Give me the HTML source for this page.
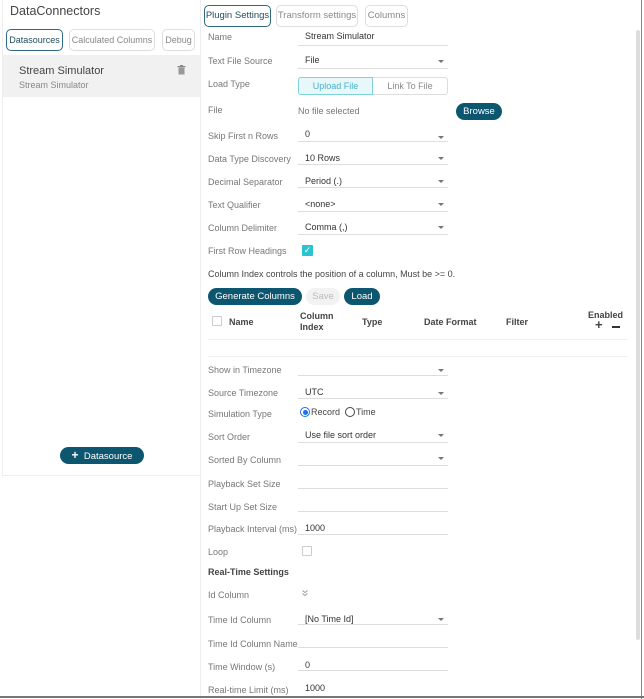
<!DOCTYPE html>
<html><head><meta charset="utf-8"><style>
*{margin:0;padding:0;box-sizing:border-box}
body{width:644px;height:699px;overflow:hidden;background:#fff;font-family:"Liberation Sans",sans-serif;font-size:9px;color:#333;position:relative}
.a{position:absolute;white-space:nowrap}
.l{position:absolute;left:208px;color:#777;font-size:9px;white-space:nowrap}
.u{position:absolute;left:298px;width:150px;border-bottom:1px solid #ddd;height:18px}
.v{position:absolute;left:305px;color:#333;font-size:9px;white-space:nowrap}
.dd{position:absolute;left:438px;width:0;height:0;border-left:3px solid transparent;border-right:3px solid transparent;border-top:3px solid #777}
.tab{position:absolute;border:1px solid #ddd;border-radius:5px;height:22px;line-height:20px;text-align:center;color:#888;font-size:9.5px;background:#fff}
.tab.on{border-color:#2d6a80;color:#1f4d5e}
.btn{position:absolute;background:#0d566f;color:#fff;border-radius:9px;height:17px;line-height:17px;text-align:center;font-size:9.5px}
.h{position:absolute;font-weight:bold;color:#444;font-size:9px;line-height:11px}
</style></head><body>
<div class="a" style="left:2px;top:0;width:199px;height:476px;border:1px solid #eee;border-top:none"></div>
<div class="a" style="left:10px;top:4px;font-size:12.5px;color:#444">DataConnectors</div>
<div class="tab on" style="left:6px;top:29px;width:57px;font-size:9px">Datasources</div>
<div class="tab" style="left:69px;top:29px;width:86px;font-size:9px">Calculated Columns</div>
<div class="tab" style="left:162px;top:29px;width:33px;font-size:9px">Debug</div>
<div class="a" style="left:3px;top:55px;width:197px;height:42px;background:#f1f1f1"></div>
<div class="a" style="left:19px;top:65px;font-size:11px;color:#444">Stream Simulator</div>
<div class="a" style="left:19px;top:80px;font-size:9px;color:#888">Stream Simulator</div>
<svg class="a" style="left:177px;top:65px" width="9" height="10"><rect x="1.5" y="2.5" width="6" height="7" fill="#999"/><rect x="0.5" y="1" width="8" height="1.2" fill="#888"/><rect x="3" y="0" width="3" height="1.2" fill="#888"/></svg>
<div class="btn" style="left:60px;top:447px;width:84px"><b style="font-size:12px">+</b>&nbsp; Datasource</div>
<div class="a" style="left:200px;top:0;width:1px;height:699px;background:#eee"></div>
<div class="a" style="left:641px;top:0;width:1px;height:699px;background:#888"></div>
<div class="a" style="left:636px;top:30px;width:4px;height:610px;background:#ddd;border-radius:2px"></div>
<div class="a" style="left:0;top:696px;width:644px;height:2px;background:#777"></div>
<div class="tab on" style="left:204px;top:5px;width:67px">Plugin Settings</div>
<div class="tab" style="left:276px;top:5px;width:82px">Transform settings</div>
<div class="tab" style="left:365px;top:5px;width:43px">Columns</div>

<div class="l" style="top:32px">Name</div><div class="u" style="top:28px"></div><div class="v" style="top:31px">Stream Simulator</div>
<div class="l" style="top:56px">Text File Source</div><div class="u" style="top:51px"></div><div class="v" style="top:55px">File</div><div class="dd" style="top:60px"></div>
<div class="l" style="top:79px">Load Type</div>
<div class="a" style="left:298px;top:77px;width:75px;height:18px;border:1px solid #7dd3d8;background:#e8f8fa;color:#4ab0c8;text-align:center;line-height:16px;border-radius:3px 0 0 3px">Upload File</div>
<div class="a" style="left:373px;top:77px;width:75px;height:18px;border:1px solid #ddd;border-left:none;color:#888;text-align:center;line-height:16px;border-radius:0 3px 3px 0">Link To File</div>
<div class="l" style="top:105px">File</div><div class="a" style="left:298px;top:106px;color:#777">No file selected</div>
<div class="btn" style="left:456px;top:103px;width:46px">Browse</div>
<div class="l" style="top:131px">Skip First n Rows</div><div class="u" style="top:124px"></div><div class="v" style="top:129px">0</div><div class="dd" style="top:136px"></div>
<div class="l" style="top:154px">Data Type Discovery</div><div class="u" style="top:147px"></div><div class="v" style="top:153px">10 Rows</div><div class="dd" style="top:157px"></div>
<div class="l" style="top:177px">Decimal Separator</div><div class="u" style="top:170px"></div><div class="v" style="top:176px">Period (.)</div><div class="dd" style="top:180px"></div>
<div class="l" style="top:200px">Text Qualifier</div><div class="u" style="top:194px"></div><div class="v" style="top:199px">&lt;none&gt;</div><div class="dd" style="top:203px"></div>
<div class="l" style="top:223px">Column Delimiter</div><div class="u" style="top:217px"></div><div class="v" style="top:222px">Comma (,)</div><div class="dd" style="top:226px"></div>
<div class="l" style="top:246px">First Row Headings</div>
<div class="a" style="left:302px;top:245px;width:11px;height:11px;background:#2cc3d0;border-radius:1px;color:#fff;font-size:9px;line-height:11px;text-align:center">✓</div>
<div class="a" style="left:208px;top:269px;color:#444">Column Index controls the position of a column, Must be &gt;= 0.</div>
<div class="btn" style="left:208px;top:288px;width:94px">Generate Columns</div>
<div class="a" style="left:306px;top:288px;width:34px;height:17px;border-radius:9px;background:#f2f2f2;color:#bbb;text-align:center;line-height:17px;font-size:9.5px">Save</div>
<div class="btn" style="left:344px;top:288px;width:36px">Load</div>
<div class="a" style="left:212px;top:316px;width:10px;height:10px;border:1px solid #ccc;border-radius:1px"></div>
<div class="h" style="left:229px;top:317px">Name</div>
<div class="h" style="left:300px;top:311px">Column<br>Index</div>
<div class="h" style="left:362px;top:317px">Type</div>
<div class="h" style="left:424px;top:317px">Date Format</div>
<div class="h" style="left:506px;top:317px">Filter</div>
<div class="h" style="left:588px;top:310px">Enabled</div>
<div class="h" style="left:595px;top:319px;font-size:13px">+</div>
<div class="a" style="left:612px;top:326px;width:8px;height:2px;background:#333"></div>
<div class="a" style="left:208px;top:339px;width:420px;height:1px;background:#eee"></div>
<div class="a" style="left:208px;top:356px;width:420px;height:1px;background:#eee"></div>
<div class="l" style="top:365px">Show in Timezone</div><div class="u" style="top:358px"></div><div class="dd" style="top:369px"></div>
<div class="l" style="top:388px">Source Timezone</div><div class="u" style="top:381px"></div><div class="v" style="top:387px">UTC</div><div class="dd" style="top:392px"></div>
<div class="l" style="top:409px">Simulation Type</div>
<div class="a" style="left:300px;top:407px;width:10px;height:10px;border:1px solid #1a73e8;border-radius:50%"><div style="margin:1.5px;width:5px;height:5px;border-radius:50%;background:#1a73e8"></div></div>
<div class="a" style="left:311px;top:407px;color:#444">Record</div>
<div class="a" style="left:345px;top:407px;width:10px;height:10px;border:1px solid #444;border-radius:50%"></div>
<div class="a" style="left:356px;top:407px;color:#444">Time</div>
<div class="l" style="top:432px">Sort Order</div><div class="u" style="top:425px"></div><div class="v" style="top:430px">Use file sort order</div><div class="dd" style="top:434px"></div>
<div class="l" style="top:455px">Sorted By Column</div><div class="u" style="top:448px"></div><div class="dd" style="top:457px"></div>
<div class="l" style="top:479px">Playback Set Size</div><div class="u" style="top:471px"></div>
<div class="l" style="top:502px">Start Up Set Size</div><div class="u" style="top:494px"></div>
<div class="l" style="top:524px">Playback Interval (ms)</div><div class="u" style="top:517px"></div><div class="v" style="top:523px">1000</div>
<div class="l" style="top:547px">Loop</div>
<div class="a" style="left:302px;top:546px;width:10px;height:10px;border:1px solid #ccc;border-radius:1px"></div>
<div class="h" style="left:208px;top:567px">Real-Time Settings</div>
<div class="l" style="top:590px">Id Column</div>
<svg class="a" style="left:302px;top:590px" width="6" height="7"><path d="M0.5 0.5 L3 2.5 L5.5 0.5 M0.5 3.5 L3 5.5 L5.5 3.5" stroke="#999" fill="none" stroke-width="0.9"/></svg>
<div class="l" style="top:615px">Time Id Column</div><div class="u" style="top:607px"></div><div class="v" style="top:614px">[No Time Id]</div><div class="dd" style="top:618px"></div>
<div class="l" style="top:639px">Time Id Column Name</div><div class="u" style="top:630px"></div>
<div class="l" style="top:662px">Time Window (s)</div><div class="u" style="top:653px"></div><div class="v" style="top:660px">0</div>
<div class="l" style="top:685px">Real-time Limit (ms)</div><div class="v" style="top:683px">1000</div>
</body></html>
